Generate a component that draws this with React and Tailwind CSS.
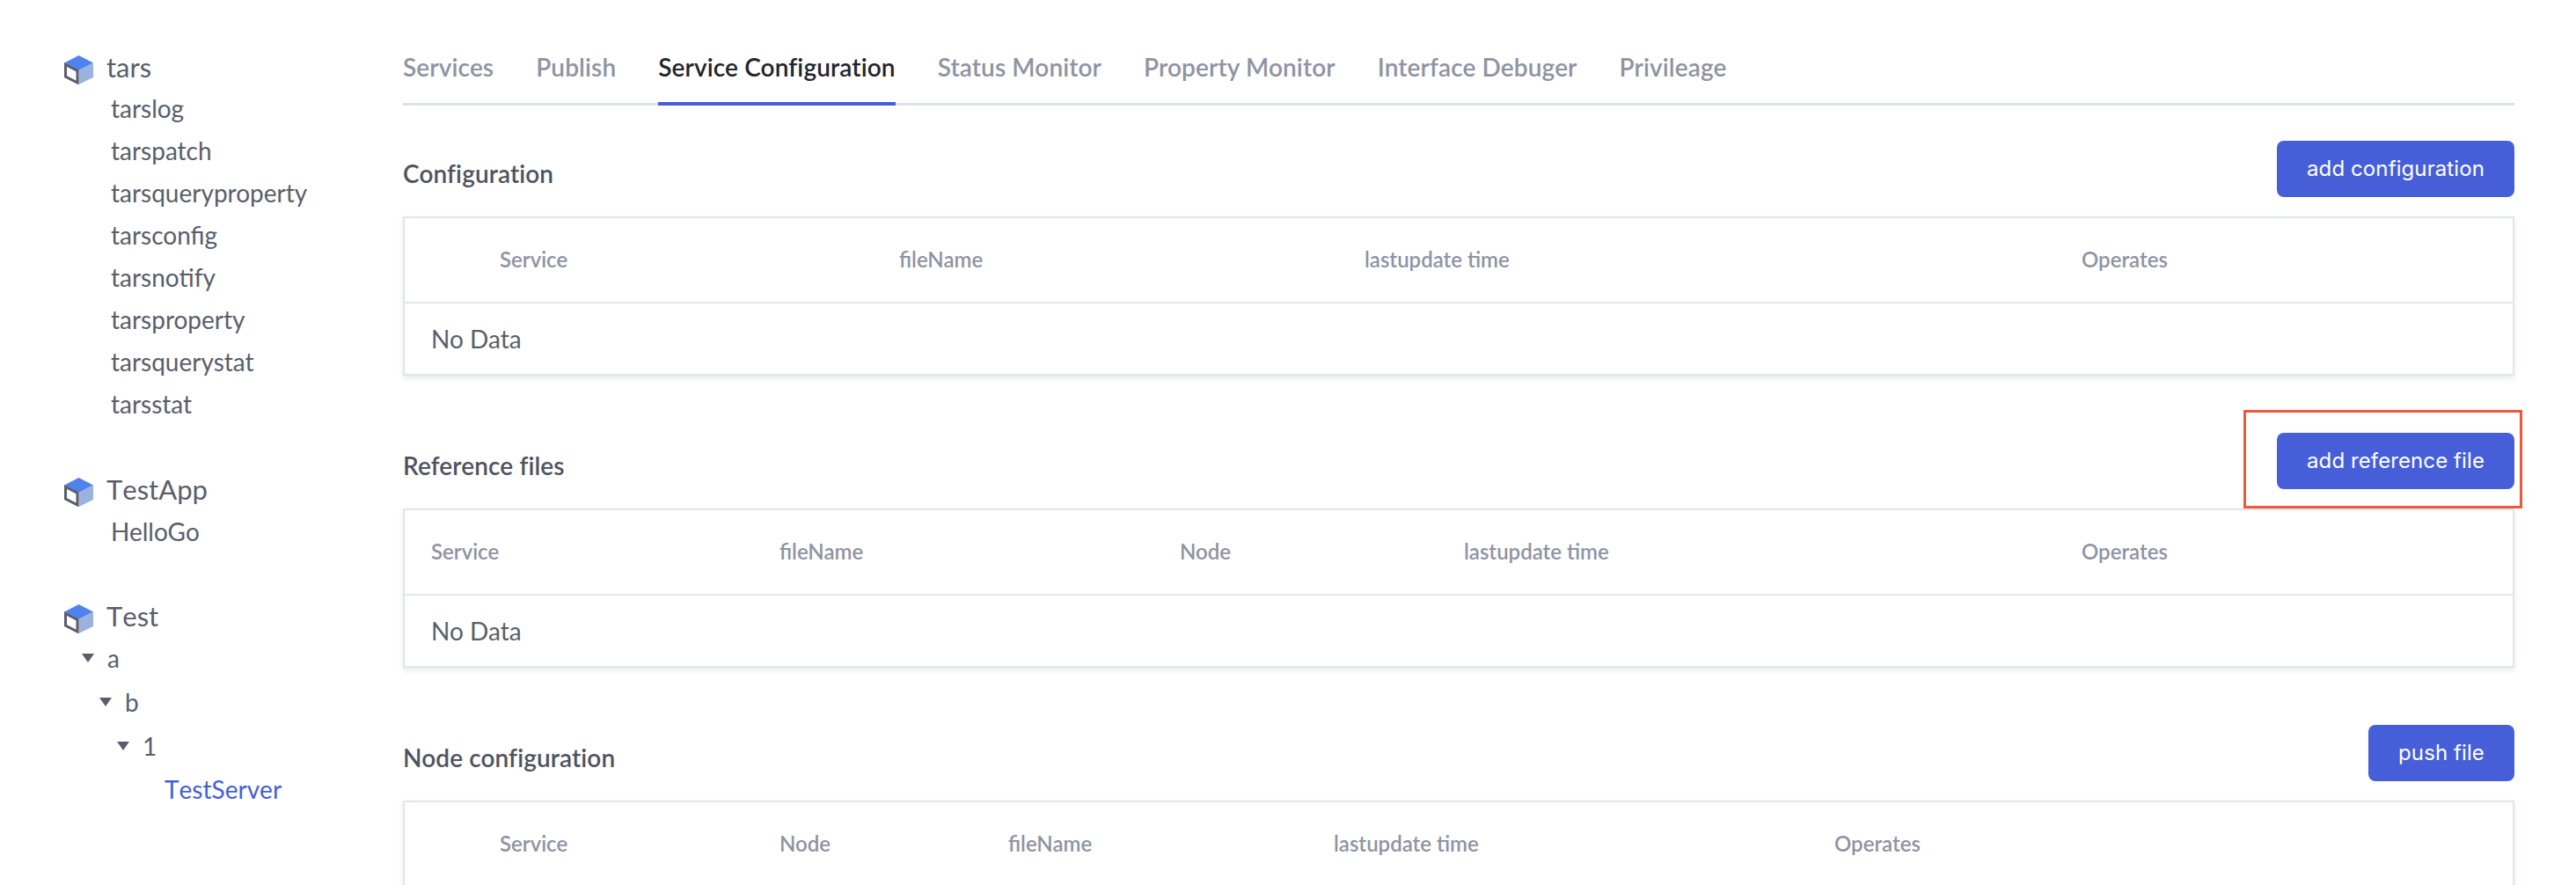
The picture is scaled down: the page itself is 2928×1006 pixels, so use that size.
const ink = "text-[#5a5e6b]";

function Cube() {
  return (
    <svg width="33" height="33" viewBox="0 0 33 33" className="shrink-0 translate-y-[3px]">
      <polygon points="16.5,0 33,8.5 16.5,17 0,8.5" fill="#4f82ee" />
      <polygon points="33,8.5 33,25 16.5,33 16.5,17" fill="#9bb1e0" />
      <polygon points="1.5,10.5 15,17.5 15,31 1.5,24" fill="#fff" stroke="#5a5e6b" strokeWidth="3" />
    </svg>
  );
}

function Caret() {
  return (
    <svg width="14" height="10" viewBox="0 0 14 10" className="shrink-0">
      <polygon points="0,0 14,0 7,10" fill="#5a5e6b" />
    </svg>
  );
}

function Group({ name, children, className = "" }) {
  return (
    <div className={`mb-12 ${className}`}>
      <div className="flex h-12 items-center gap-[15px] text-[31px] [font-kerning:none]">
        <Cube />
        <span>{name}</span>
      </div>
      {children}
    </div>
  );
}

function Leaf({ children }) {
  return <div className="flex h-12 items-center pl-[53px] text-[28px]">{children}</div>;
}

function Branch({ label, className }) {
  return (
    <div className={`flex h-[49.5px] items-center gap-[15px] text-[28px] ${className}`}>
      <Caret />
      <span>{label}</span>
    </div>
  );
}

function Sidebar() {
  return (
    <aside className={`w-[458px] shrink-0 pl-[73px] pt-[52px] ${ink}`}>
      <Group name="tars" className="[&>div:nth-child(n+2)]:-translate-y-[1px]">
        {["tarslog", "tarspatch", "tarsqueryproperty", "tarsconfig", "tarsnotify", "tarsproperty", "tarsquerystat", "tarsstat"].map((n) => (
          <Leaf key={n}>{n}</Leaf>
        ))}
      </Group>
      <Group name="TestApp">
        <Leaf>HelloGo</Leaf>
      </Group>
      <Group name="Test" className="[&>div:nth-child(2)]:-translate-y-[1px]">
        <Branch label="a" className="pl-[20px]" />
        <Branch label="b" className="pl-[40px]" />
        <Branch label="1" className="pl-[60px]" />
        <div className="flex h-[49.5px] items-center pl-[114px] text-[28px] text-[#4360d8] [font-kerning:none]">TestServer</div>
      </Group>
    </aside>
  );
}

const tabs = ["Services", "Publish", "Service Configuration", "Status Monitor", "Property Monitor", "Interface Debuger", "Privileage"];

function Tabs() {
  return (
    <nav className="flex h-[120px] gap-[48px] border-b-[3px] border-[#dfe1e8] pt-[54px] text-[28px] font-semibold tracking-[0.12px]">
      {tabs.map((t) => (
        <div
          key={t}
          className={
            t === "Service Configuration"
              ? "-mb-[3px] h-[66px] border-b-[4px] border-[#4360d8] leading-[44px] text-[#22252e]"
              : "h-[66px] leading-[44px] text-[#8f93a3]"
          }
        >
          {t}
        </div>
      ))}
    </nav>
  );
}

function Section({ title, button, cols, noData, boxed }) {
  return (
    <section className="mb-[65px] last:mb-0">
      <div className="relative flex h-[64px] items-center justify-between">
        <h2 className="pt-[10px] text-[28px] font-semibold tracking-[0.1px] text-[#4f5361]">{title}</h2>
        <button className="flex h-[64px] w-fit min-w-[166px] items-center justify-center rounded-lg bg-[#465fd9] px-[34px] font-['Inter',sans-serif] text-[24px] tracking-[0.1px] text-white">
          {button}
        </button>
        {boxed && (
          <div className="absolute -right-[9px] -top-[26px] h-[112px] w-[317px] border-[3px] border-[#f0583c]" />
        )}
      </div>
      <div className="mt-[22px] border-2 border-[#e3e5ec] shadow-[0_3px_6px_rgba(40,50,80,0.1)]">
        <div className="flex h-[97px] items-center border-b-2 border-[#e3e5ec] pb-[2px] text-[24px] font-semibold text-[#8f93a3]">
          {cols.map(([label, w]) => (
            <div key={label} className="shrink-0" style={{ width: w }}>
              {label}
            </div>
          ))}
        </div>
        {noData && <div className="flex h-[80px] items-center pl-[30px] text-[28px] text-[#5a5e6b]">No Data</div>}
      </div>
    </section>
  );
}

export default function App() {
  return (
    <div className="flex h-[1006px] w-[2928px] overflow-hidden bg-white font-['Lato',sans-serif]">
      <Sidebar />
      <main className="w-[2400px] shrink-0">
        <Tabs />
        <div className="pt-[40px]">
          <Section
            title="Configuration"
            button="add configuration"
            noData
            cols={[["", 108], ["Service", 454], ["fileName", 529], ["lastupdate time", 815], ["Operates", 200]]}
          />
          <Section
            title="Reference files"
            button="add reference file"
            noData
            boxed
            cols={[["", 30], ["Service", 396], ["fileName", 455], ["Node", 323], ["lastupdate time", 702], ["Operates", 200]]}
          />
          <Section
            title="Node configuration"
            button="push file"
            cols={[["", 108], ["Service", 318], ["Node", 260], ["fileName", 370], ["lastupdate time", 569], ["Operates", 200]]}
          />
        </div>
      </main>
    </div>
  );
}
